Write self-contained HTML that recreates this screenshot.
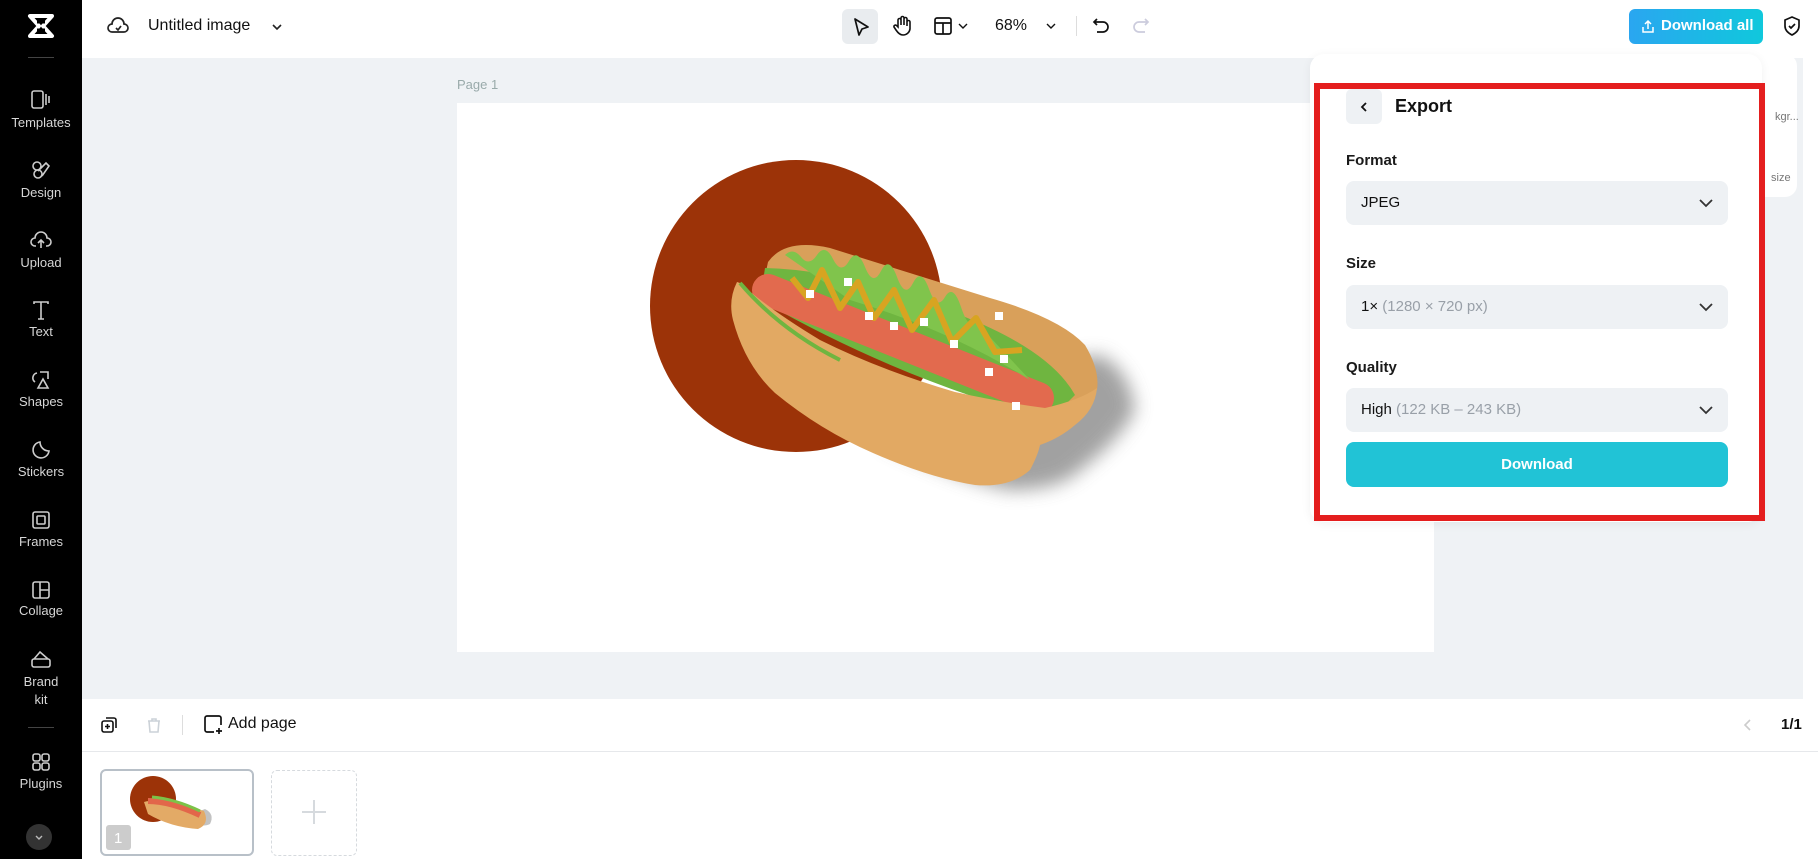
<!DOCTYPE html>
<html><head><meta charset="utf-8">
<style>
*{box-sizing:border-box;margin:0;padding:0}
body{width:1818px;height:859px;overflow:hidden;background:#fff;font-family:"Liberation Sans",sans-serif;position:relative;color:#111}
.a{position:absolute}
.side{left:0;top:0;width:82px;height:859px;background:#000}
.si{position:absolute;left:0;width:82px;text-align:center;color:#d6d6d6;font-size:13px}
.ic{position:absolute;left:29px;width:24px;height:24px}
.lbl{font-size:15px;font-weight:bold;color:#1a1a1a}
.sel{position:absolute;left:1346px;width:382px;height:44px;background:#eef1f4;border-radius:8px;font-size:15px;line-height:44px;padding-left:15px;color:#111}
.sel svg{position:absolute;right:14px;top:15px}
.g{color:#99a0a8}
</style></head><body>
<div class="a side"></div>
<svg class="a" style="left:27px;top:13px" width="28" height="26" viewBox="0 0 28 26"><path d="M3 3h22l-9 10 9 10H3l9-10z" fill="none" stroke="#fff" stroke-width="4" stroke-linejoin="round"/><path d="M10 9h8M10 17h8" stroke="#000" stroke-width="3"/></svg>
<div class="a" style="left:28px;top:57px;width:26px;height:1px;background:#444"></div>
<svg class="a ic" style="top:88px" viewBox="0 0 24 24" fill="none" stroke="#ccc" stroke-width="1.6"><rect x="3" y="3" width="11" height="17" rx="2"/><path d="M17 6v11M20 8v7"/></svg>
<div class="si" style="top:115px">Templates</div>
<svg class="a ic" style="top:158px" viewBox="0 0 24 24" fill="none" stroke="#ccc" stroke-width="1.6"><circle cx="8" cy="8" r="4"/><circle cx="9" cy="16" r="4"/><path d="M13 18l7-10-3-3-8 8"/></svg>
<div class="si" style="top:185px">Design</div>
<svg class="a ic" style="top:228px" viewBox="0 0 24 24" fill="none" stroke="#ccc" stroke-width="1.6"><path d="M7 18H6a4 4 0 010-8 6 6 0 0112 0 4 4 0 010 8h-1M12 20v-8M9 15l3-3 3 3"/></svg>
<div class="si" style="top:255px">Upload</div>
<svg class="a ic" style="top:298px" viewBox="0 0 24 24" fill="none" stroke="#ccc" stroke-width="1.6"><path d="M5 6V4h14v2M12 4v17M9 21h6"/></svg>
<div class="si" style="top:324px">Text</div>
<svg class="a ic" style="top:368px" viewBox="0 0 24 24" fill="none" stroke="#ccc" stroke-width="1.6"><path d="M8 5a5 5 0 00-2 9M11 4h8v7M9 20l5-9 5 9z"/></svg>
<div class="si" style="top:394px">Shapes</div>
<svg class="a ic" style="top:438px" viewBox="0 0 24 24" fill="none" stroke="#ccc" stroke-width="1.6"><path d="M20 13A8 8 0 1111 4c0 5 4 9 9 9z"/></svg>
<div class="si" style="top:464px">Stickers</div>
<svg class="a ic" style="top:508px" viewBox="0 0 24 24" fill="none" stroke="#ccc" stroke-width="1.6"><rect x="4" y="4" width="16" height="16" rx="2"/><rect x="8" y="8" width="8" height="8" rx="1"/></svg>
<div class="si" style="top:534px">Frames</div>
<svg class="a ic" style="top:578px" viewBox="0 0 24 24" fill="none" stroke="#ccc" stroke-width="1.6"><rect x="4" y="4" width="16" height="16" rx="2"/><path d="M11 4v16M11 12h9"/></svg>
<div class="si" style="top:603px">Collage</div>
<svg class="a ic" style="top:647px" viewBox="0 0 24 24" fill="none" stroke="#ccc" stroke-width="1.6"><rect x="3" y="12" width="18" height="8" rx="2"/><path d="M5 12l6-7 8 7"/></svg>
<div class="si" style="top:673px;line-height:18px">Brand<br>kit</div>
<div class="a" style="left:28px;top:727px;width:26px;height:1px;background:#444"></div>
<svg class="a ic" style="top:750px" viewBox="0 0 24 24" fill="none" stroke="#ccc" stroke-width="1.6"><rect x="4" y="4" width="7" height="7" rx="2"/><rect x="13" y="4" width="7" height="7" rx="2"/><rect x="4" y="13" width="7" height="7" rx="2"/><rect x="13" y="13" width="7" height="7" rx="2"/></svg>
<div class="si" style="top:776px">Plugins</div>
<div class="a" style="left:26px;top:824px;width:26px;height:26px;border-radius:50%;background:#333"></div>
<svg class="a" style="left:33px;top:831px" width="12" height="12" viewBox="0 0 12 12"><path d="M3 5l3 3 3-3" stroke="#bbb" fill="none" stroke-width="1.4"/></svg>
<div class="a" style="left:82px;top:406px;width:7px;height:56px;background:#222;border-radius:0 8px 8px 0"></div>

<svg class="a" style="left:106px;top:14px" width="24" height="24" viewBox="0 0 24 24" fill="none" stroke="#222" stroke-width="1.7"><path d="M7 18H6a4 4 0 010-8 6 6 0 0112 0 4 4 0 010 8H7z"/><path d="M10 14l2 2 3-4"/></svg>
<div class="a" style="left:148px;top:17px;font-size:16px;color:#111">Untitled image</div>
<svg class="a" style="left:270px;top:20px" width="14" height="14" viewBox="0 0 14 14"><path d="M3 5l4 4 4-4" stroke="#222" fill="none" stroke-width="1.6"/></svg>
<div class="a" style="left:842px;top:9px;width:36px;height:35px;background:#e9ecef;border-radius:6px"></div>
<svg class="a" style="left:850px;top:16px" width="22" height="22" viewBox="0 0 22 22"><path d="M5 3l13 8-6 2-3 6z" fill="none" stroke="#111" stroke-width="1.7" stroke-linejoin="round"/></svg>
<svg class="a" style="left:890px;top:14px" width="24" height="24" viewBox="0 0 24 24" fill="none" stroke="#111" stroke-width="1.6"><path d="M8 13V6a1.5 1.5 0 013 0v5V4a1.5 1.5 0 013 0v7V5a1.5 1.5 0 013 0v7V8a1.5 1.5 0 013 0v7a7 7 0 01-7 6c-3 0-5-2-7-5l-2-3a1.5 1.5 0 012.5-1.5z"/></svg>
<svg class="a" style="left:932px;top:15px" width="22" height="22" viewBox="0 0 22 22" fill="none" stroke="#111" stroke-width="1.7"><rect x="3" y="3" width="16" height="16" rx="2"/><path d="M3 8h16M11 8v11"/></svg>
<svg class="a" style="left:957px;top:20px" width="12" height="12" viewBox="0 0 12 12"><path d="M2 4l4 4 4-4" stroke="#111" fill="none" stroke-width="1.4"/></svg>
<div class="a" style="left:995px;top:17px;font-size:16px">68%</div>
<svg class="a" style="left:1045px;top:20px" width="12" height="12" viewBox="0 0 12 12"><path d="M2 4l4 4 4-4" stroke="#111" fill="none" stroke-width="1.4"/></svg>
<div class="a" style="left:1076px;top:16px;width:1px;height:20px;background:#ddd"></div>
<svg class="a" style="left:1090px;top:15px" width="22" height="22" viewBox="0 0 22 22" fill="none" stroke="#111" stroke-width="1.7"><path d="M7 4L4 7l3 3M4 7h9a5 5 0 010 10H7"/></svg>
<svg class="a" style="left:1130px;top:15px" width="22" height="22" viewBox="0 0 22 22" fill="none" stroke="#ccd" stroke-width="1.7"><path d="M15 4l3 3-3 3M18 7H9a5 5 0 000 10h6"/></svg>
<div class="a" style="left:1629px;top:9px;width:134px;height:35px;border-radius:6px;background:linear-gradient(90deg,#2aa6f0,#10c8dc)"></div>
<svg class="a" style="left:1640px;top:18px" width="16" height="16" viewBox="0 0 16 16" fill="none" stroke="#fff" stroke-width="1.5"><path d="M3 9v5h10V9M8 11V3M5 6l3-3 3 3"/></svg>
<div class="a" style="left:1661px;top:17px;font-size:15px;font-weight:bold;color:#fff">Download all</div>
<svg class="a" style="left:1781px;top:15px" width="22" height="22" viewBox="0 0 22 22" fill="none" stroke="#111" stroke-width="1.7"><path d="M11 2l7 3v6c0 4-3 7-7 9-4-2-7-5-7-9V5z"/><path d="M8 11l2 2 4-4"/></svg>

<div class="a" style="left:82px;top:58px;width:1736px;height:641px;background:#eff2f5"></div>
<div class="a" style="left:1803px;top:58px;width:15px;height:641px;background:#fff"></div>
<div class="a" style="left:457px;top:77px;font-size:13px;color:#9aa">Page 1</div>
<div class="a" style="left:457px;top:103px;width:977px;height:549px;background:#fff"></div>
<svg class="a" style="left:0;top:0" width="1818" height="859">
<defs><filter id="b" x="-20%" y="-20%" width="140%" height="140%"><feGaussianBlur stdDeviation="9"/></filter></defs>
<circle cx="796" cy="306" r="146" fill="#9c3308"/>
<path d="M880 440 Q960 480 1010 490 Q1060 490 1080 470 Q1120 440 1135 410 Q1130 370 1100 355 L1060 360 Q990 420 880 440Z" fill="#8a8a8a" opacity=".8" filter="url(#b)"/>
<path d="M768 262 Q785 238 830 248 L990 298 Q1060 318 1085 345 Q1100 370 1097 390 L1060 410 L760 300Z" fill="#d9a05a"/>
<path d="M765 268 Q850 270 960 315 Q1050 350 1075 395 L1050 420 Q900 380 760 300Z" fill="#6fb540"/>
<line x1="768" y1="290" x2="1038" y2="398" stroke="#e26a4e" stroke-width="32" stroke-linecap="round"/>
<path d="M785 255 q8-8 16 2 t16 -2 t16 4 t16 2 t16 6 t16 4 t16 6 t16 6 t16 6 t16 8 t16 10 t14 14 L1030 380 Q950 330 850 300Z" fill="#80c44c"/>
<polyline points="792,278 808,298 822,270 840,308 858,282 874,318 894,290 912,330 934,300 952,342 976,318 995,352 1022,350" fill="none" stroke="#d8a421" stroke-width="6" stroke-linejoin="round"/>
<path d="M737 282 Q728 300 733 320 Q745 365 775 393 Q820 430 873 453 Q930 478 975 485 Q1010 488 1030 470 Q1038 455 1040 445 Q1060 438 1075 425 Q1095 410 1097 388 Q1080 400 1045 408 Q1000 402 955 392 Q880 370 820 340 Q770 310 740 283Z" fill="#e2a963"/>
<path d="M740 283 Q780 330 840 360" stroke="#6fb540" stroke-width="4" fill="none"/>
<g fill="#fff"><rect x="806" y="290" width="8" height="8"/><rect x="844" y="278" width="8" height="8"/><rect x="865" y="312" width="8" height="8"/><rect x="890" y="322" width="8" height="8"/><rect x="920" y="318" width="8" height="8"/><rect x="950" y="340" width="8" height="8"/><rect x="985" y="368" width="8" height="8"/><rect x="1000" y="355" width="8" height="8"/><rect x="995" y="312" width="8" height="8"/><rect x="1012" y="402" width="8" height="8"/></g>
</svg>

<div class="a" style="left:1700px;top:54px;width:97px;height:143px;background:#fff;border-radius:12px"></div>
<div class="a" style="left:1775px;top:111px;font-size:11px;color:#777">kgr...</div>
<div class="a" style="left:1771px;top:172px;font-size:11px;color:#777">size</div>
<div class="a" style="left:1310px;top:54px;width:452px;height:468px;background:#fff;border-radius:14px;box-shadow:0 2px 10px rgba(0,0,0,.06)"></div>
<div class="a" style="left:1314px;top:83px;width:451px;height:438px;border:6px solid #e41e1e"></div>
<div class="a" style="left:1346px;top:89px;width:36px;height:35px;background:#eef1f4;border-radius:6px"></div>
<svg class="a" style="left:1358px;top:100px" width="12" height="14" viewBox="0 0 12 14"><path d="M8 3L4 7l4 4" stroke="#111" fill="none" stroke-width="1.8"/></svg>
<div class="a" style="left:1395px;top:96px;font-size:18px;font-weight:bold">Export</div>
<div class="a lbl" style="left:1346px;top:152px">Format</div>
<div class="sel" style="top:181px">JPEG<svg width="16" height="14" viewBox="0 0 16 14"><path d="M2 4l6 6 6-6" stroke="#333" fill="none" stroke-width="1.8"/></svg></div>
<div class="a lbl" style="left:1346px;top:255px">Size</div>
<div class="sel" style="top:285px">1× <span class="g">(1280 × 720 px)</span><svg width="16" height="14" viewBox="0 0 16 14"><path d="M2 4l6 6 6-6" stroke="#333" fill="none" stroke-width="1.8"/></svg></div>
<div class="a lbl" style="left:1346px;top:359px">Quality</div>
<div class="sel" style="top:388px">High <span class="g">(122 KB – 243 KB)</span><svg width="16" height="14" viewBox="0 0 16 14"><path d="M2 4l6 6 6-6" stroke="#333" fill="none" stroke-width="1.8"/></svg></div>
<div class="a" style="left:1346px;top:442px;width:382px;height:45px;background:#21c3d6;border-radius:8px;color:#fff;font-weight:bold;font-size:15px;text-align:center;line-height:45px">Download</div>

<div class="a" style="left:82px;top:751px;width:1736px;height:1px;background:#e6e8eb"></div>
<svg class="a" style="left:99px;top:715px" width="20" height="20" viewBox="0 0 20 20" fill="none" stroke="#111" stroke-width="1.6"><rect x="3" y="6" width="11" height="11" rx="2"/><path d="M7 3h8a2 2 0 012 2v8M8.5 9v5M6 11.5h5"/></svg>
<svg class="a" style="left:144px;top:715px" width="20" height="20" viewBox="0 0 20 20" fill="none" stroke="#ccd2d8" stroke-width="1.6"><path d="M4 6h12M8 6V4h4v2M5 6l1 11h8l1-11"/></svg>
<div class="a" style="left:182px;top:715px;width:1px;height:20px;background:#ddd"></div>
<svg class="a" style="left:202px;top:713px" width="22" height="22" viewBox="0 0 22 22" fill="none" stroke="#111" stroke-width="1.7"><path d="M12 19H5a2 2 0 01-2-2V5a2 2 0 012-2h12a2 2 0 012 2v7M17 15v6M14 18h6"/></svg>
<div class="a" style="left:228px;top:715px;font-size:16px;color:#111">Add page</div>
<svg class="a" style="left:1741px;top:717px" width="14" height="16" viewBox="0 0 14 16"><path d="M9 3L4 8l5 5" stroke="#ccc" fill="none" stroke-width="1.6"/></svg>
<div class="a" style="left:1781px;top:716px;font-size:15px;font-weight:bold">1/1</div>
<div class="a" style="left:100px;top:769px;width:154px;height:87px;border:2px solid #b8c0c8;border-radius:6px;background:#fff"></div>
<svg class="a" style="left:100px;top:769px" width="154" height="87"><circle cx="53" cy="30" r="23" fill="#9c3308"/><path d="M80 50 Q100 60 110 55 Q115 45 105 40Z" fill="#999" opacity=".6"/><path d="M44 33 Q60 28 104 42 Q110 55 98 60 Q70 58 48 45Z" fill="#e3aa66"/><path d="M48 32 Q70 32 100 46" stroke="#e2664a" stroke-width="6" fill="none"/><path d="M52 28 Q75 30 100 42" stroke="#7cc248" stroke-width="3" fill="none"/><rect x="6" y="56" width="25" height="25" rx="3" fill="#ccc"/><text x="14" y="74" fill="#fff" font-size="15" font-family="Liberation Sans">1</text></svg>
<div class="a" style="left:271px;top:770px;width:86px;height:86px;border:1px dashed #d6dade;border-radius:6px"></div>
<svg class="a" style="left:300px;top:798px" width="28" height="28" viewBox="0 0 28 28"><path d="M14 2v24M2 14h24" stroke="#d6dade" stroke-width="2"/></svg>
</body></html>
